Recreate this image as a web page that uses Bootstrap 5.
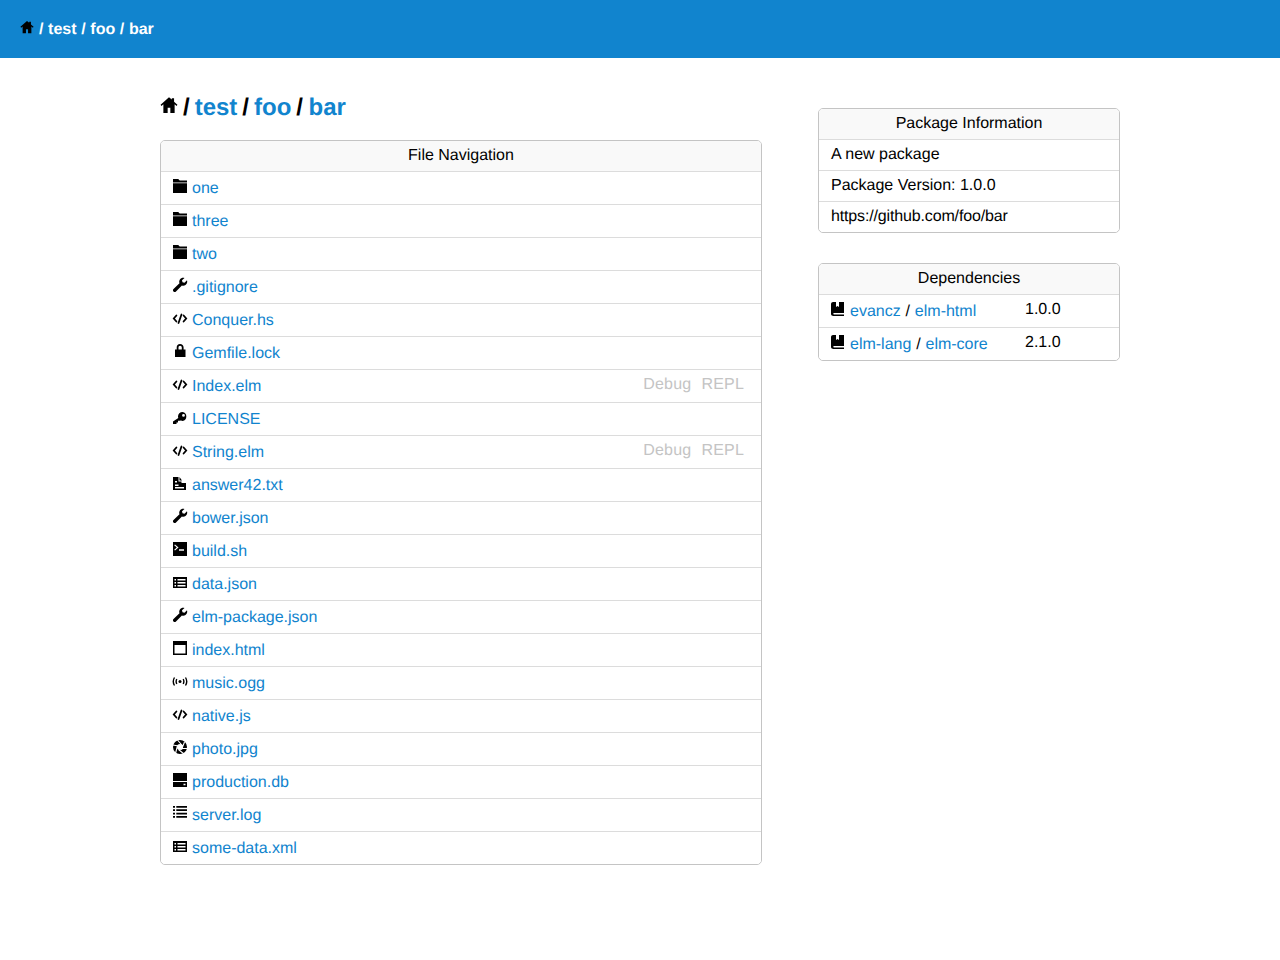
<!DOCTYPE html>
<html lang="en">
<head>
<meta charset="utf-8">
<title>test / foo / bar</title>
<link href="https://cdn.jsdelivr.net/npm/bootstrap@5.3.0/dist/css/bootstrap.min.css" rel="stylesheet">
<style>
body{font-family:"Liberation Sans",Arial,sans-serif;font-size:16px;color:#000;background:#fff;line-height:20px;text-rendering:geometricPrecision}
a{color:#1184ce;text-decoration:none}
.topbar{height:58px;background:#1184ce;color:#fff;font-weight:700;padding:0 20px;gap:5px;align-items:center}
.topbar a{color:#fff}
.topbar span{padding-top:2px;word-spacing:.2px}
.topbar .ico{color:#000;margin-top:-4px;width:14px;height:14px}
.wrap{width:960px;margin:0 auto}
.leftcol{width:602px;padding-top:36px}
.rightcol{width:302px;padding-top:50px}
.crumbs{font-size:24px;font-weight:700;line-height:28px;gap:5px;height:28px;margin:0 0 18px;align-items:center}
.crumbs .ico{width:18px;height:18px;margin-top:-6px}
.crumbs a:last-child{margin-left:.6px}
.panel{border:1px solid #c4c4c4;border-radius:5px;--bs-card-border-radius:5px;--bs-card-inner-border-radius:4px;overflow:hidden;margin-bottom:30px}
.panel .card-header{background:#f9f9f9;border-bottom:1px solid #dcdcdc;height:31px;padding:0;text-align:center;line-height:29px;border-radius:0}
.filerow,.siderow{border:0;border-bottom:1px solid #dcdcdc;background:#fff;color:#000;padding:0 17px 0 11px;display:flex;align-items:center}
.filerow:last-child,.siderow:last-child{border-bottom:0}
.filerow{height:33px}
.filerow:last-child{height:32px}
.siderow{height:31px;line-height:29px;padding-left:12px;align-items:flex-start}
.siderow:last-child{height:30px}
.deprow{height:33px;padding:0 11px;align-items:center;line-height:20px}
.deprow:last-child{height:32px}
.ico{width:16px;height:16px;flex:none;fill:currentColor;display:block}
.filerow .ico{margin:-4px 4px 0 0}
.deprow .ico{margin:-2px 4px 0 0}
.fname{flex:1;padding-top:2px}
.tools{display:flex;gap:10px;color:#c4c4c4;margin-top:-3px;letter-spacing:.2px}
.depname{width:175px;padding-top:2px;word-spacing:.4px}
.depver{margin-top:-2px}
.urlrow{letter-spacing:-.15px}
</style>
</head>
<body>
<svg width="0" height="0" class="position-absolute">
<defs>
<symbol id="i-home" viewBox="0 0 16 16"><path d="M8 1 .5 7.800l.8 1L3 7.400V15h3.800v-4.500h2.400V15H13V7.400l1.700 1.400.8-1L12.500 5V2h-2v1.200z"/></symbol>
<symbol id="i-folder" viewBox="0 0 16 16"><path d="M1 1h5.200L7.700 2.500H15v1.900H1zM1 5.300h14V15H1z"/></symbol>
<symbol id="i-wrench" viewBox="0 0 16 16"><path d="M15 3.300 12.500 5.800 10.500 5.300 10 3.300 12.500.9C10.700.4 8.800 1 7.900 2.400 7.100 3.600 7 5 7.500 6.200L1.500 12c-.7.700-.7 1.800 0 2.500.7.700 1.800.7 2.500 0L9.900 8.600c1.200.4 2.500.3 3.600-.5C15 7.100 15.600 5 15 3.300z"/></symbol>
<symbol id="i-code" viewBox="0 0 16 16"><path fill="none" stroke="currentColor" stroke-width="1.800" stroke-linecap="round" d="M4.400 5.500 1.800 8.500l2.600 3M11.600 5.500l2.600 3-2.600 3M9.500 4.500 6.500 13"/></symbol>
<symbol id="i-lock" viewBox="0 0 16 16"><path fill-rule="evenodd" d="M8 1C5.900 1 4.700 2.500 4.700 4.500V6.500H3V14h10.500V6.500H11.600V4.500C11.600 2.500 10.100 1 8 1zM6.500 6.500V4.500C6.500 3.400 7.100 2.700 8.100 2.700s1.700.7 1.700 1.800v2z"/></symbol>
<symbol id="i-key" viewBox="0 0 16 16"><path fill-rule="evenodd" d="M10.500 3A4.500 4.500 0 0 0 6 7.500c0 .6.100 1.100.3 1.500L1 12.500V15h3.500v-1.600H6v-1.600h1.600L9 11.500c.5.200 1 .4 1.500.4a4.500 4.500 0 0 0 0-8.900zM11.500 5a1.400 1.400 0 1 1 0 2.800 1.400 1.400 0 0 1 0-2.800z"/></symbol>
<symbol id="i-txt" viewBox="0 0 16 16"><path fill-rule="evenodd" d="M1 2h5.500v4.500h3V8H14v7H1zM7.500 2l2.500 3.500H7.500zM3 6v1.400h2V6zM3 9.500V11h3.500V9.500zM3 12v1.500h9V12z"/></symbol>
<symbol id="i-term" viewBox="0 0 16 16"><path fill-rule="evenodd" d="M1 1h14v14H1zM3 3.500l-.8.800L4.800 6.500 2.200 8.700l.8.800 3.600-3zM7 8.300v1.500h5V8.300z"/></symbol>
<symbol id="i-table" viewBox="0 0 16 16"><path fill-rule="evenodd" d="M1 3h14v11H1zM2.500 5v1.500h1.500V5zM5.500 5v1.500h8V5zM2.500 8v1.500h1.500V8zM5.500 8v1.500h8V8zM2.500 11v1.500h1.500V11zM5.500 11v1.500h8V11z"/></symbol>
<symbol id="i-window" viewBox="0 0 16 16"><path fill-rule="evenodd" d="M1 1h14v14H1zM2.500 5v8.500h11V5z"/></symbol>
<symbol id="i-radio" viewBox="0 0 16 16"><circle cx="8" cy="8.500" r="1.500"/><path fill="none" stroke="currentColor" stroke-width="1.400" d="M2.500 4.500C1 6.900 1 10.100 2.500 12.500M13.500 4.500c1.500 2.400 1.500 5.600 0 8M4.800 6C4 7.500 4 9.500 4.800 11M11.200 6c.8 1.500.8 3.500 0 5"/></symbol>
<symbol id="i-shutter" viewBox="0 0 16 16"><circle cx="8" cy="8" r="5" fill="none" stroke="currentColor" stroke-width="4"/><g stroke="#fff" stroke-width="1.100"><path d="M10.600 7 5.500 1M9.500 10.600 12.500 3M5.500 9 15 9.500M5.400 7 3.500 14.500M6.500 10.500 12 15M10.400 7.500 .5 6"/></g></symbol>
<symbol id="i-db" viewBox="0 0 16 16"><path fill-rule="evenodd" d="M1 1h14v8H1zM1 10h14v5H1zM11.500 11.700v1.500h2v-1.500z"/></symbol>
<symbol id="i-list" viewBox="0 0 16 16"><path d="M1 1h2v1.800H1zM4.300 1H15v1.800H4.300zM1 4.300h2v1.800H1zM4.300 4.300H15v1.800H4.300zM1 7.700h2v1.800H1zM4.300 7.700H15v1.800H4.300zM1 11h2v1.800H1zM4.300 11H15v1.800H4.300z"/></symbol>
<symbol id="i-book" viewBox="0 0 16 16"><path fill-rule="evenodd" d="M3 0h3v5l1.500-1L9 5V0h5v11H4c-1 0-1 1.500 0 1.500h10V14H3.500C2 14 1 13.300 1 12V2C1 .8 2 0 3 0z"/></symbol>
</defs>
</svg>

<nav class="topbar d-flex">
  <svg class="ico"><use href="#i-home"/></svg>
  <span>/ <a href="#">test</a> / <a href="#">foo</a> / <a href="#">bar</a></span>
</nav>

<div class="wrap d-flex justify-content-between">
  <main class="leftcol">
    <h1 class="crumbs d-flex">
      <svg class="ico"><use href="#i-home"/></svg>
      <span>/</span><a href="#">test</a><span>/</span><a href="#">foo</a><span>/</span><a href="#">bar</a>
    </h1>
    <section class="card panel">
      <div class="card-header">File Navigation</div>
      <div class="list-group list-group-flush">
        <div class="list-group-item filerow"><svg class="ico"><use href="#i-folder"/></svg><a class="fname" href="#">one</a></div>
        <div class="list-group-item filerow"><svg class="ico"><use href="#i-folder"/></svg><a class="fname" href="#">three</a></div>
        <div class="list-group-item filerow"><svg class="ico"><use href="#i-folder"/></svg><a class="fname" href="#">two</a></div>
        <div class="list-group-item filerow"><svg class="ico"><use href="#i-wrench"/></svg><a class="fname" href="#">.gitignore</a></div>
        <div class="list-group-item filerow"><svg class="ico"><use href="#i-code"/></svg><a class="fname" href="#">Conquer.hs</a></div>
        <div class="list-group-item filerow"><svg class="ico"><use href="#i-lock"/></svg><a class="fname" href="#">Gemfile.lock</a></div>
        <div class="list-group-item filerow"><svg class="ico"><use href="#i-code"/></svg><a class="fname" href="#">Index.elm</a><span class="tools"><span>Debug</span><span>REPL</span></span></div>
        <div class="list-group-item filerow"><svg class="ico"><use href="#i-key"/></svg><a class="fname" href="#">LICENSE</a></div>
        <div class="list-group-item filerow"><svg class="ico"><use href="#i-code"/></svg><a class="fname" href="#">String.elm</a><span class="tools"><span>Debug</span><span>REPL</span></span></div>
        <div class="list-group-item filerow"><svg class="ico"><use href="#i-txt"/></svg><a class="fname" href="#">answer42.txt</a></div>
        <div class="list-group-item filerow"><svg class="ico"><use href="#i-wrench"/></svg><a class="fname" href="#">bower.json</a></div>
        <div class="list-group-item filerow"><svg class="ico"><use href="#i-term"/></svg><a class="fname" href="#">build.sh</a></div>
        <div class="list-group-item filerow"><svg class="ico"><use href="#i-table"/></svg><a class="fname" href="#">data.json</a></div>
        <div class="list-group-item filerow"><svg class="ico"><use href="#i-wrench"/></svg><a class="fname" href="#">elm-package.json</a></div>
        <div class="list-group-item filerow"><svg class="ico"><use href="#i-window"/></svg><a class="fname" href="#">index.html</a></div>
        <div class="list-group-item filerow"><svg class="ico"><use href="#i-radio"/></svg><a class="fname" href="#">music.ogg</a></div>
        <div class="list-group-item filerow"><svg class="ico"><use href="#i-code"/></svg><a class="fname" href="#">native.js</a></div>
        <div class="list-group-item filerow"><svg class="ico"><use href="#i-shutter"/></svg><a class="fname" href="#">photo.jpg</a></div>
        <div class="list-group-item filerow"><svg class="ico"><use href="#i-db"/></svg><a class="fname" href="#">production.db</a></div>
        <div class="list-group-item filerow"><svg class="ico"><use href="#i-list"/></svg><a class="fname" href="#">server.log</a></div>
        <div class="list-group-item filerow"><svg class="ico"><use href="#i-table"/></svg><a class="fname" href="#">some-data.xml</a></div>
      </div>
    </section>
  </main>
  <aside class="rightcol">
    <section class="card panel">
      <div class="card-header">Package Information</div>
      <div class="list-group list-group-flush">
        <div class="list-group-item siderow">A new package</div>
        <div class="list-group-item siderow">Package Version: 1.0.0</div>
        <div class="list-group-item siderow urlrow">https://github.com/foo/bar</div>
      </div>
    </section>
    <section class="card panel">
      <div class="card-header">Dependencies</div>
      <div class="list-group list-group-flush">
        <div class="list-group-item siderow deprow"><svg class="ico"><use href="#i-book"/></svg><span class="depname"><a href="#">evancz</a> / <a href="#">elm-html</a></span><span class="depver">1.0.0</span></div>
        <div class="list-group-item siderow deprow"><svg class="ico"><use href="#i-book"/></svg><span class="depname"><a href="#">elm-lang</a> / <a href="#">elm-core</a></span><span class="depver">2.1.0</span></div>
      </div>
    </section>
  </aside>
</div>
<script src="https://cdn.jsdelivr.net/npm/bootstrap@5.3.0/dist/js/bootstrap.bundle.min.js"></script>
</body>
</html>
